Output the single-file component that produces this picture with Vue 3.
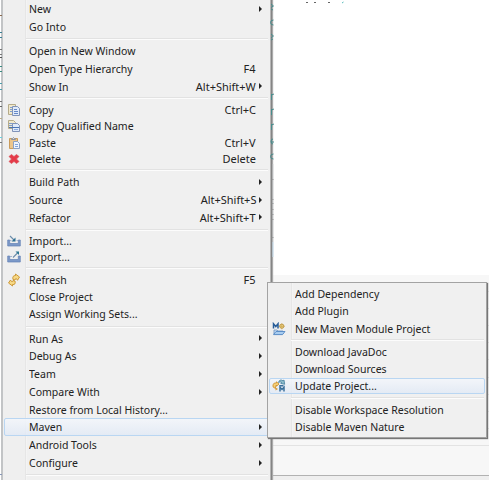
<script setup>
const sep = (h) => ({ sep: true, h })
const mainItems = [
  { label: 'New', h: 18, sub: true },
  { label: 'Go Into', h: 18 },
  sep(6),
  { label: 'Open in New Window', h: 18 },
  { label: 'Open Type Hierarchy', h: 18, key: 'F4' },
  { label: 'Show In', h: 17, key: 'Alt+Shift+W', sub: true },
  sep(6),
  { label: 'Copy', h: 17, key: 'Ctrl+C', icon: 'copy' },
  { label: 'Copy Qualified Name', h: 16, icon: 'copyName' },
  { label: 'Paste', h: 17, key: 'Ctrl+V', icon: 'paste' },
  { label: 'Delete', h: 16, key: 'Delete', icon: 'delete' },
  sep(6),
  { label: 'Build Path', h: 18, sub: true },
  { label: 'Source', h: 18, key: 'Alt+Shift+S', sub: true },
  { label: 'Refactor', h: 17, key: 'Alt+Shift+T', sub: true },
  sep(7),
  { label: 'Import...', h: 16, icon: 'import' },
  { label: 'Export...', h: 16, icon: 'export' },
  sep(6),
  { label: 'Refresh', h: 17, key: 'F5', icon: 'refresh' },
  { label: 'Close Project', h: 17 },
  { label: 'Assign Working Sets...', h: 18 },
  sep(7),
  { label: 'Run As', h: 17, sub: true },
  { label: 'Debug As', h: 18, sub: true },
  { label: 'Team', h: 18, sub: true },
  { label: 'Compare With', h: 18, sub: true },
  { label: 'Restore from Local History...', h: 17 },
  { label: 'Maven', h: 18, sub: true, active: true },
  { label: 'Android Tools', h: 18, sub: true },
  { label: 'Configure', h: 18, sub: true },
  sep(6),
]
const mavenItems = [
  { label: 'Add Dependency', h: 17 },
  { label: 'Add Plugin', h: 18 },
  { label: 'New Maven Module Project', h: 17, icon: 'module' },
  sep(6),
  { label: 'Download JavaDoc', h: 17 },
  { label: 'Download Sources', h: 18 },
  { label: 'Update Project...', h: 16, icon: 'update', active: true },
  sep(7),
  { label: 'Disable Workspace Resolution', h: 17 },
  { label: 'Disable Maven Nature', h: 18 },
]
const menus = [
  { name: 'main', items: mainItems },
  { name: 'maven', items: mavenItems },
]
const leftMarks = [
  [15, '#8a6a50'], [32, '#3b7f94'], [37, '#3b7f94'], [49, '#777'], [54, '#777'], [57, '#555'], [66, '#3a8a80'],
  [71, '#3a8a80'], [83, '#4d9cab'], [89, '#4d9cab'], [101, '#777'], [106, '#666'], [118, '#b8ac8a'],
  [137, '#6cd0e0'], [142, '#777'],
]
</script>

<template>
  <div class="screen">
    <div class="panel">
      <i v-for="n in 11" :key="n" class="panel-row"></i>
    </div>
    <svg class="bits" width="491" height="480">
      <rect v-for="m in leftMarks" :key="m[0]" x="0" :y="m[0]" width="2" height="1" :fill="m[1]" />
      <path d="M0 474.500h2" stroke="#8797b8" />
      <path d="M306 2.500h2M314 2.500h2M328 2.500h2" stroke="#666" />
      <path d="M342 3l1.500-1" stroke="#5bb" />
      <path d="M271 4l2.500 2-2.500 1.500M271 9l2 1M273.500 20q-3 0-3 2.500t3 2.500M271 34l2.500 2-2.500 2M271 40l2-1M271.500 94v6M271.500 95l2.500-1M271.500 109v6M271.500 110l2.500-1M271.500 124v6M271.500 125l2.500-1M273 139q-2 0-2 2.500t2 2.500M271 142h3M273.500 154q-3 0-3 2.500t3 2.500" stroke="#458c8c" fill="none" />
      <path d="M271 179.500h2.500M271 199.500h2.500M271 203.500h2.500M271 209.500h2.500M271 214.500h2.500M271 219.500h2.500M271 237.500h2.500" stroke="#888" />
      <path d="M273 164v78" stroke="#c9ccd0" opacity=".6" />
      <path d="M273 242v15" stroke="#c5def0" />
    </svg>

    <ul v-for="menu in menus" :key="menu.name" class="menu" :class="menu.name">
      <li
        v-for="(it, i) in menu.items"
        :key="i"
        :class="[it.sep ? 'sep' : 'item', { active: it.active }]"
        :style="{ height: it.h + 'px' }"
      >
        <template v-if="!it.sep">
          <span class="icon">
            <svg v-if="it.icon" width="14" height="14" viewBox="0 0 14 14">
              <g v-if="it.icon === 'copy'">
                <path d="M1.500 1.500h7v10h-7z" fill="#f0e8cc" stroke="#b5ab8a" />
                <path d="M3 4.500h2M3 6.500h2M3 8.500h2" stroke="#7f9fd0" />
                <path d="M5.500 3.500h5l2 2v7h-7z" fill="#dfeafa" stroke="#8093b8" />
                <path d="M7 6.500h3M7 8.500h4M7 10.500h4" stroke="#6488c8" />
              </g>
              <g v-else-if="it.icon === 'copyName'">
                <path d="M1.500 1.500h5l2 2v6h-7z" fill="#f0e8cc" stroke="#b5ab8a" />
                <path d="M2 4.500h4M2 6.500h3" stroke="#7d9ccf" />
                <path d="M5.500 4.500h5l2 2v6h-7z" fill="#dfeafa" stroke="#8093b8" />
                <path d="M2 8.500h10" stroke="#4a74b5" />
                <path d="M7 10.500h4" stroke="#8fade0" />
              </g>
              <g v-else-if="it.icon === 'paste'">
                <path d="M2.500 2.500h8v10h-8z" fill="#ecc58b" stroke="#c99b5b" />
                <path d="M4.500 3.500v-1h1q1-2 2 0h1v1z" fill="#d8dde6" stroke="#8d9199" />
                <path d="M6.500 5.500h4l2 2v5h-6z" fill="#eef4fd" stroke="#8ba0c4" />
                <path d="M8 8.500h3M8 10.500h3" stroke="#83a5dc" />
              </g>
              <path v-else-if="it.icon === 'delete'" d="M2 4.500 4.500 2.500 7 4.500 9.500 2.500 12 4.500 9.500 7 12 9.500 9.500 11.500 7 9.500 4.500 11.500 2 9.500 4.500 7z" fill="#e53a48" stroke="#d9535b" stroke-width=".7" />
              <g v-else-if="it.icon === 'import'">
                <path d="M.700 6h2v3.500h8.600V6h2v6H.700z" fill="#7c99c8" stroke="#6383b6" stroke-width=".7" />
                <path d="M3 6.500h1.500M9.500 6.500H11" stroke="#a4b4cf" />
                <path d="M3 2l4 4" stroke="#6b8dab" stroke-width="1.100" />
                <path d="M8.500 3.500v4h-4z" fill="#2b6e91" />
              </g>
              <g v-else-if="it.icon === 'export'">
                <path d="M.700 6h2v3.500h8.600V6h2v6H.700z" fill="#7c99c8" stroke="#6383b6" stroke-width=".7" />
                <path d="M3 6.500h2" stroke="#a4b4cf" />
                <path d="M6 7.500l5-5" stroke="#6b8dab" stroke-width="1.100" />
                <path d="M8.500 1.500H12V5z" fill="#2b7791" />
              </g>
              <g v-else-if="it.icon === 'refresh'" fill="#f7d985" stroke="#c8912c" stroke-width=".9" stroke-linejoin="round">
                <path d="M6 6.500Q5 2.500 8.500 2.500V1L12.500 4 10.500 7.300 9.500 5.700Q8 5.500 8 7z" />
                <path d="M8 8Q9 12 5.500 11.500V13L1.500 10 3.500 7 4.500 8.500Q6 9 6 7.500z" />
              </g>
              <g v-else-if="it.icon === 'module'">
                <circle cx="9.800" cy="4.200" r="2.100" fill="#f5dc90" stroke="#b78e3e" stroke-width=".9" />
                <path d="M9.800 1.300v6M6.800 4.300h6" stroke="#caa34d" stroke-width=".7" />
                <path d="M1.500 6.500V1.800L3.800 4.500 6 1.800v4.700" fill="none" stroke="#285d98" stroke-width="1.500" />
                <path d="M2 12V8h3l1 1h5v3z" fill="#cde2f7" stroke="#6991be" stroke-width=".8" />
                <path d="M1.500 12.600 4 9.500h9l-2.500 3.100z" fill="#a9cdf0" stroke="#5288c4" stroke-width=".9" />
              </g>
              <g v-else>
                <path d="M3.500 9.500Q0 8.500 1 5.800T4.500 4V2.800L7 5 4.500 7.300V6q-1.500 .5-1 3.500z" fill="#f7d078" stroke="#c98d2b" stroke-width=".8" />
                <path d="M3.500 8.500 6 10l-2.500 1.500z" fill="#d99a35" />
                <path d="M6.500 3.500Q7.500-.3 11 1.700l1-.7.700 4.300-4-.9 1-.9Q8.200 2.200 6.500 3.500z" fill="#8dbccb" stroke="#447f9e" stroke-width=".8" />
                <path d="M8 12.500V8.300l2 2.200 2-2.200v4.200M7.500 6.800h4" fill="none" stroke="#3b719d" stroke-width="1.500" />
              </g>
            </svg>
          </span>
          <span class="label">{{ it.label }}</span>
          <span class="key">{{ it.key }}</span>
          <span class="arrow"><i v-if="it.sub"></i></span>
        </template>
      </li>
    </ul>
  </div>
</template>

<style>
body {
  margin: 0;
  background: #fff;
}
</style>

<style scoped>
.screen {
  position: relative;
  width: 491px;
  height: 480px;
  overflow: hidden;
  background: #fff;
  font: 11.5px/16px "Noto Sans", "Open Sans", sans-serif;
  color: #222;
}
.panel {
  box-sizing: border-box;
  position: absolute;
  top: 275px;
  left: 270px;
  width: 219px;
  height: 205px;
  overflow: hidden;
  background: linear-gradient(#f7f7f7 200px, #b2b2b2 200px, #b2b2b2 201px, #efefef 201px);
}
.panel-row {
  display: block;
  box-sizing: border-box;
  height: 17.1px;
  border-bottom: 1px solid #e3e3e3;
}
.panel-row:last-child {
  border: 0;
}
.bits {
  position: absolute;
  z-index: 2;
  left: 0;
  top: 0;
}
.menu {
  position: absolute;
  box-sizing: border-box;
  margin: 0;
  padding: 0;
  list-style: none;
}
.main {
  top: 0;
  left: 1px;
  width: 270px;
  height: 480px;
  border-left: 2px solid #c2c4c6;
  border-right: 1px solid #b6b6b6;
  background: linear-gradient(90deg, #efefef 22px, #e6e6e6 22px, #e6e6e6 23px, #f7f7f7 23px, #f0f0f0 24px);
  box-shadow: 1px 0 0 #858585, 2px 0 1px #aaa;
}
.maven {
  z-index: 3;
  top: 282px;
  left: 267px;
  width: 220px;
  height: 156px;
  padding-top: 2px;
  border: 1px solid #a3a3a3;
  background: linear-gradient(90deg, #efefef 23px, #e6e6e6 23px, #e6e6e6 24px, #f7f7f7 24px, #f0f0f0 25px);
  box-shadow: 1px 1px 1px #777;
}
.item {
  position: relative;
  box-sizing: border-box;
  display: grid;
  grid-template-columns: 26px 1fr auto 14px;
  align-items: center;
  white-space: nowrap;
}
.maven .item {
  grid-template-columns: 26.5px 1fr auto 14px;
}
.sep {
  display: flex;
  align-items: center;
  padding-left: 23px;
  padding-right: 2px;
}
.sep::before {
  content: "";
  flex: 1;
  height: 1px;
  border-top: 1px solid #e2e2e2;
  background: #fcfcfc;
}
.active::before {
  content: "";
  position: absolute;
  inset: 0 1px;
  border: 1px solid #b9d6f2;
  border-radius: 2px;
  background: linear-gradient(rgba(243, 246, 251, .85), rgba(224, 233, 246, .75));
}
.icon,
.label,
.key,
.arrow {
  position: relative;
}
.label {
  justify-self: start;
  transform: scaleX(.915);
  transform-origin: 0 50%;
}
.key {
  transform: scaleX(.955);
  transform-origin: 100% 50%;
}
.icon svg {
  display: block;
  margin-left: 4px;
}
.maven .icon svg {
  margin-left: 4px;
}
.arrow {
  display: flex;
  padding: 0 0 1px 3px;
}
.arrow i {
  border: solid transparent;
  border-width: 3px 0 3px 3.5px;
  border-left-color: #222;
}
</style>
